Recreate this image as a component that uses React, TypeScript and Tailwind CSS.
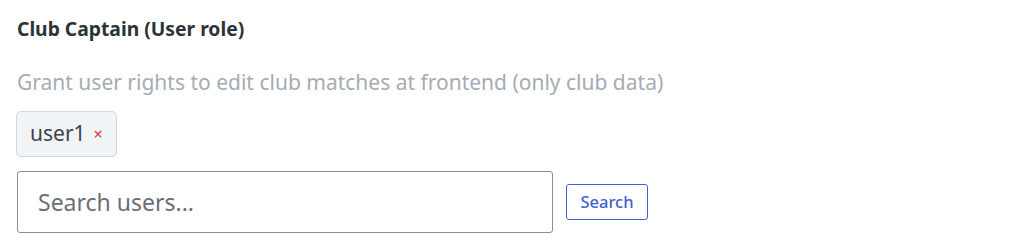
import { useState } from 'react';

export default function App() {
  const [users, setUsers] = useState(['user1']);
  const [query, setQuery] = useState('');

  return (
    <div className="min-h-screen bg-white px-[17px] pt-[16px]" style={{ fontFamily: '"Noto Sans", "Open Sans", sans-serif' }}>
      <h3 className="text-[19.3px] leading-[26px] font-bold text-[#2c3338]">Club Captain (User role)</h3>

      <p className="mt-[26px] text-[21px] leading-[28px] text-[#a5acb3]">
        Grant user rights to edit club matches at frontend (only club data)
      </p>

      <div className="mt-[15px] flex gap-2">
        {users.map((u) => (
          <span
            key={u}
            className="-ml-px flex h-[46px] items-center gap-[8px] rounded-[5px] border border-[#cfd7df] bg-[#f1f4f7] pl-[13px] pr-[13px] text-[21px] text-[#3c434a]"
          >
            {u}
            <button
              onClick={() => setUsers(users.filter((x) => x !== u))}
              className="text-[16px] leading-none text-[#d63638]"
            >
              ×
            </button>
          </span>
        ))}
      </div>

      <div className="mt-[14px] flex items-center gap-[13px]">
        <input
          value={query}
          onChange={(e) => setQuery(e.target.value)}
          placeholder="Search users..."
          className="h-[62px] w-[536px] rounded-[3px] border border-[#8c8f94] px-[20px] text-[23px] text-[#3c434a] placeholder:text-[#6b6f74] outline-none"
        />
        <button className="h-[36px] w-[82px] rounded-[3px] border border-[#4161d0] text-[16.5px] font-medium text-[#4161d0]">
          Search
        </button>
      </div>
    </div>
  );
}
